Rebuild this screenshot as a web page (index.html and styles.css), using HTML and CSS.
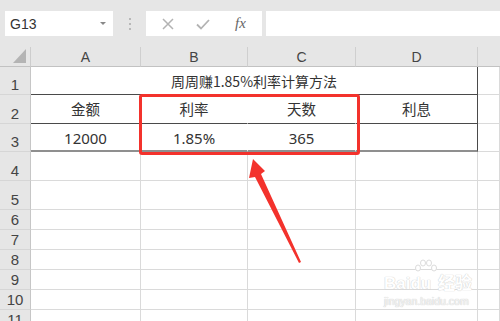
FILE: index.html
```html
<!DOCTYPE html>
<html lang="zh-CN">
<head>
<meta charset="utf-8">
<title>周周赚1.85%利率计算方法</title>
<link rel="stylesheet" href="styles.css">
</head>
<body>
<div class="page">
  <div class="toolbar">
    <div class="namebox"><span class="name">G13</span><span class="drop"></span></div>
    <div class="sep"><span></span><span></span><span></span></div>
    <div class="fxbox">
      <svg class="ico" width="14" height="14" viewBox="0 0 14 14"><path d="M2 2 L12 12 M12 2 L2 12" stroke="#b3b3b3" stroke-width="1.5" fill="none"/></svg>
      <svg class="ico" width="16" height="14" viewBox="0 0 16 14"><path d="M2 7.5 L6 11.5 L14 3" stroke="#b3b3b3" stroke-width="1.8" fill="none"/></svg>
      <span class="fx">fx</span>
    </div>
    <div class="formula"></div>
  </div>

  <div class="sheet">
    <div class="corner"><span class="tri"></span></div>
    <div class="colh">A</div>
    <div class="colh">B</div>
    <div class="colh">C</div>
    <div class="colh">D</div>
    <div class="colh blank"></div>

    <div class="rowh">1</div>
    <div class="cell title">周周赚1.85%利率计算方法</div>
    <div class="cell"></div>

    <div class="rowh">2</div>
    <div class="cell t2">金额</div>
    <div class="cell t2">利率</div>
    <div class="cell t2">天数</div>
    <div class="cell t2 edge">利息</div>
    <div class="cell"></div>

    <div class="rowh">3</div>
    <div class="cell t3">12000</div>
    <div class="cell t3">1.85%</div>
    <div class="cell t3">365</div>
    <div class="cell t3 edge"></div>
    <div class="cell"></div>

    <div class="rowh">4</div><div class="cell"></div><div class="cell"></div><div class="cell"></div><div class="cell"></div><div class="cell"></div>
    <div class="rowh">5</div><div class="cell"></div><div class="cell"></div><div class="cell"></div><div class="cell"></div><div class="cell"></div>
    <div class="rowh">6</div><div class="cell"></div><div class="cell"></div><div class="cell"></div><div class="cell"></div><div class="cell"></div>
    <div class="rowh">7</div><div class="cell"></div><div class="cell"></div><div class="cell"></div><div class="cell"></div><div class="cell"></div>
    <div class="rowh">8</div><div class="cell"></div><div class="cell"></div><div class="cell"></div><div class="cell"></div><div class="cell"></div>
    <div class="rowh">9</div><div class="cell"></div><div class="cell"></div><div class="cell"></div><div class="cell"></div><div class="cell"></div>
    <div class="rowh">10</div><div class="cell"></div><div class="cell"></div><div class="cell"></div><div class="cell"></div><div class="cell"></div>
    <div class="rowh">11</div><div class="cell"></div><div class="cell"></div><div class="cell"></div><div class="cell"></div><div class="cell"></div>
  </div>

  <div class="highlight"></div>
  <svg class="arrow" width="500" height="321" viewBox="0 0 500 321">
    <polygon points="253,159 265,171 261,174 301,262 299,263 255,177 249,178" fill="#f3322c"/>
  </svg>
  <div class="watermark">
    <svg class="paw" width="26" height="16" viewBox="0 0 26 16">
      <g fill="#ffffff" stroke="#dcdcdc" stroke-width="1">
        <ellipse cx="5" cy="9" rx="2.5" ry="3"/>
        <ellipse cx="10" cy="4" rx="2.5" ry="3"/>
        <ellipse cx="16" cy="4" rx="2.5" ry="3"/>
        <ellipse cx="21" cy="9" rx="2.5" ry="3"/>
      </g>
    </svg>
    <div class="wm-main">Bai<span class="du">du</span> 经验</div>
    <div class="wm-sub">jingyan.baidu.com</div>
  </div>
</div>
</body>
</html>
```

FILE: styles.css
```css
* { box-sizing: border-box; }
html, body { margin: 0; padding: 0; }
body {
  width: 500px;
  height: 321px;
  overflow: hidden;
  background: #ffffff;
  font-family: "Noto Sans CJK SC", "Noto Sans", sans-serif;
  color: #333;
}
.page {
  position: relative;
  width: 500px;
  height: 321px;
  overflow: hidden;
}

/* toolbar */
.toolbar {
  height: 47px;
  background: #e6e6e6;
  display: flex;
  align-items: flex-start;
  padding: 11px 0 0 5px;
}
.namebox {
  width: 108px;
  height: 25px;
  background: #fff;
  display: flex;
  align-items: center;
  justify-content: space-between;
  padding: 0 7px 0 5px;
}
.name {
  font-family: "Liberation Sans", "Noto Sans", sans-serif;
  font-size: 14px;
  color: #333;
}
.drop {
  width: 0; height: 0;
  border-left: 3px solid transparent;
  border-right: 3px solid transparent;
  border-top: 3px solid #888;
}
.sep {
  width: 33px;
  height: 25px;
  display: flex;
  flex-direction: column;
  align-items: center;
  justify-content: center;
  gap: 3px;
}
.sep span {
  width: 2px; height: 2px;
  background: #a8a8a8;
  border-radius: 1px;
}
.fxbox {
  width: 116px;
  height: 25px;
  background: #fff;
  display: flex;
  align-items: center;
  padding: 0 0 0 15px;
  gap: 20px;
}
.fx {
  font-family: "Liberation Serif", "DejaVu Serif", serif;
  font-style: italic;
  font-size: 15px;
  color: #666;
  margin-left: 4px;
}
.formula {
  flex: 1;
  height: 25px;
  background: #fff;
  margin-left: 4px;
}

/* sheet */
.sheet {
  display: grid;
  grid-template-columns: 31px 110px 107px 108px 122px 22px;
  grid-template-rows: 20px 28px 29px 28px 29px 29px 20px 20px 20px 20px 20px 20px;
}
.corner {
  background: #e6e6e6;
  border-right: 1px solid #cdcdcd;
  border-bottom: 1px solid #c2c2c2;
  position: relative;
}
.tri {
  position: absolute;
  right: 4px;
  bottom: 3px;
  width: 0; height: 0;
  border-left: 13px solid transparent;
  border-bottom: 14px solid #b4b4b4;
}
.colh {
  background: #e6e6e6;
  border-right: 1px solid #cfcfcf;
  border-bottom: 1px solid #c2c2c2;
  display: flex;
  align-items: flex-end;
  justify-content: center;
  font-family: "Liberation Sans", "Noto Sans", sans-serif;
  font-size: 14px;
  color: #444;
  padding-bottom: 1px;
  line-height: 16px;
}
.colh.blank { border-right: none; }
.rowh {
  background: #e6e6e6;
  border-right: 1px solid #c6c6c6;
  border-bottom: 1px solid #d6d6d6;
  display: flex;
  align-items: flex-end;
  justify-content: center;
  font-family: "Liberation Sans", "Noto Sans", sans-serif;
  font-size: 15px;
  color: #444;
  line-height: 17px;
  padding-bottom: 1px;
}
.cell {
  border-right: 1px solid #dadada;
  border-bottom: 1px solid #dadada;
  display: flex;
  align-items: flex-end;
  justify-content: center;
  font-size: 14.5px;
  line-height: 20px;
  color: #333;
}
.title {
  grid-column: 2 / span 4;
  border-right: 1px solid #4a4a4a;
  border-bottom: 1px solid #4a4a4a;
  padding-bottom: 3px;
  font-size: 14px;
}
.t2 {
  border-right: 1px solid #ffffff;
  border-bottom: 1px solid #4a4a4a;
  padding-bottom: 4px;
}
.t3 {
  border-right: 1px solid #ffffff;
  border-bottom: 2px solid #8f8f8f;
  padding-bottom: 2px;
  font-family: "Noto Sans", "Noto Sans CJK SC", sans-serif;
  font-size: 15px;
}
.cell.edge { border-right: 1px solid #4a4a4a; }

/* overlays */
.highlight {
  position: absolute;
  left: 139px;
  top: 94px;
  width: 221px;
  height: 61px;
  border: 3px solid #f3322c;
  border-radius: 3px;
}
.arrow {
  position: absolute;
  left: 0;
  top: 0;
  pointer-events: none;
}
.watermark {
  position: absolute;
  left: 384px;
  top: 259px;
  width: 90px;
  color: #ffffff;
  font-family: "Liberation Sans", "Noto Sans CJK SC", sans-serif;
  text-shadow: 0 0 1px #cfcfcf, 0 0 1px #cfcfcf;
}
.paw {
  display: block;
  margin-left: 29px;
}
.wm-main {
  font-size: 17px;
  font-weight: bold;
  line-height: 18px;
  white-space: nowrap;
}
.du { margin-right: 2px; }
.wm-sub {
  font-size: 10.5px;
  line-height: 13px;
  margin-top: 2px;
  white-space: nowrap;
  color: #f4f4f4;
}
```
